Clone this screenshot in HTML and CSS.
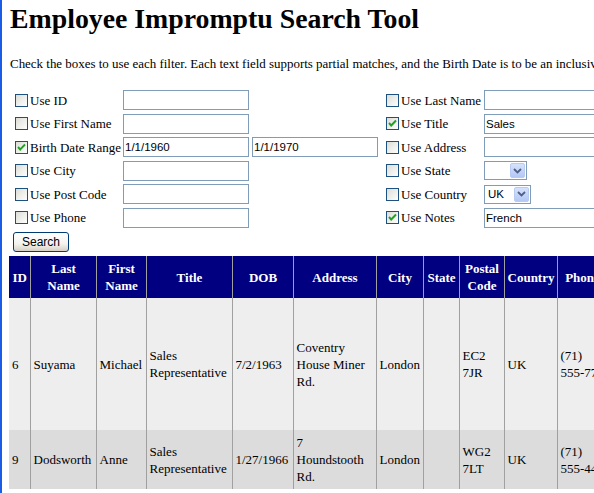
FILE: index.html
```html
<!DOCTYPE html>
<html>
<head>
<meta charset="utf-8">
<title>Employee Impromptu Search Tool</title>
<link rel="stylesheet" href="styles.css">
</head>
<body>
<h1 class="title">Employee Impromptu Search Tool</h1>
<p class="intro">Check the boxes to use each filter. Each text field supports partial matches, and the Birth Date is to be an inclusive range.</p>

<div class="filters">
  <label class="lbl"><span class="cb"><svg width="13" height="13" viewBox="0 0 13 13"><defs><linearGradient id="g" x1="0" y1="0" x2="1" y2="1"><stop offset="0" stop-color="#dcdcd5"/><stop offset="1" stop-color="#ffffff"/></linearGradient></defs><rect x="0.5" y="0.5" width="12" height="12" fill="url(#g)" stroke="#1c5180"/></svg></span>Use ID</label>
  <input class="txt" type="text" value="">
  <span></span>
  <label class="lbl"><span class="cb"><svg width="13" height="13" viewBox="0 0 13 13"><rect x="0.5" y="0.5" width="12" height="12" fill="url(#g)" stroke="#1c5180"/></svg></span>Use Last Name</label>
  <input class="txt" type="text" value="">

  <label class="lbl"><span class="cb"><svg width="13" height="13" viewBox="0 0 13 13"><rect x="0.5" y="0.5" width="12" height="12" fill="url(#g)" stroke="#1c5180"/></svg></span>Use First Name</label>
  <input class="txt" type="text" value="">
  <span></span>
  <label class="lbl"><span class="cb"><svg width="13" height="13" viewBox="0 0 13 13"><rect x="0.5" y="0.5" width="12" height="12" fill="url(#g)" stroke="#1c5180"/><polyline points="3,6 5.2,8.5 10,3.5" fill="none" stroke="#21a121" stroke-width="1.9"/></svg></span>Use Title</label>
  <input class="txt" type="text" value="Sales">

  <label class="lbl"><span class="cb"><svg width="13" height="13" viewBox="0 0 13 13"><rect x="0.5" y="0.5" width="12" height="12" fill="url(#g)" stroke="#1c5180"/><polyline points="3,6 5.2,8.5 10,3.5" fill="none" stroke="#21a121" stroke-width="1.9"/></svg></span>Birth Date Range</label>
  <input class="txt" type="text" value="1/1/1960">
  <input class="txt" type="text" value="1/1/1970">
  <label class="lbl"><span class="cb"><svg width="13" height="13" viewBox="0 0 13 13"><rect x="0.5" y="0.5" width="12" height="12" fill="url(#g)" stroke="#1c5180"/></svg></span>Use Address</label>
  <input class="txt" type="text" value="">

  <label class="lbl"><span class="cb"><svg width="13" height="13" viewBox="0 0 13 13"><rect x="0.5" y="0.5" width="12" height="12" fill="url(#g)" stroke="#1c5180"/></svg></span>Use City</label>
  <input class="txt" type="text" value="">
  <span></span>
  <label class="lbl"><span class="cb"><svg width="13" height="13" viewBox="0 0 13 13"><rect x="0.5" y="0.5" width="12" height="12" fill="url(#g)" stroke="#1c5180"/></svg></span>Use State</label>
  <div class="sel sel-state"><span class="sel-val"></span><span class="sel-btn"><svg width="9" height="6" viewBox="0 0 9 6"><polyline points="1,1 4.5,4.5 8,1" fill="none" stroke="#4d6185" stroke-width="1.8"/></svg></span></div>

  <label class="lbl"><span class="cb"><svg width="13" height="13" viewBox="0 0 13 13"><rect x="0.5" y="0.5" width="12" height="12" fill="url(#g)" stroke="#1c5180"/></svg></span>Use Post Code</label>
  <input class="txt" type="text" value="">
  <span></span>
  <label class="lbl"><span class="cb"><svg width="13" height="13" viewBox="0 0 13 13"><rect x="0.5" y="0.5" width="12" height="12" fill="url(#g)" stroke="#1c5180"/></svg></span>Use Country</label>
  <div class="sel sel-country"><span class="sel-val">UK</span><span class="sel-btn"><svg width="9" height="6" viewBox="0 0 9 6"><polyline points="1,1 4.5,4.5 8,1" fill="none" stroke="#4d6185" stroke-width="1.8"/></svg></span></div>

  <label class="lbl"><span class="cb"><svg width="13" height="13" viewBox="0 0 13 13"><rect x="0.5" y="0.5" width="12" height="12" fill="url(#g)" stroke="#1c5180"/></svg></span>Use Phone</label>
  <input class="txt" type="text" value="">
  <span></span>
  <label class="lbl"><span class="cb"><svg width="13" height="13" viewBox="0 0 13 13"><rect x="0.5" y="0.5" width="12" height="12" fill="url(#g)" stroke="#1c5180"/><polyline points="3,6 5.2,8.5 10,3.5" fill="none" stroke="#21a121" stroke-width="1.9"/></svg></span>Use Notes</label>
  <input class="txt" type="text" value="French">
</div>

<button class="btn" type="button">Search</button>

<table class="results">
  <colgroup>
    <col class="c-id"><col class="c-last"><col class="c-first"><col class="c-title"><col class="c-dob"><col class="c-addr"><col class="c-city"><col class="c-state"><col class="c-post"><col class="c-country"><col class="c-phone"><col class="c-ext"><col class="c-notes">
  </colgroup>
  <thead>
    <tr class="hrow">
      <th>ID</th><th>Last<br>Name</th><th>First<br>Name</th><th>Title</th><th>DOB</th><th>Address</th><th>City</th><th>State</th><th>Postal<br>Code</th><th>Country</th><th>Phone</th><th>Extension</th><th>Notes</th>
    </tr>
  </thead>
  <tbody>
    <tr class="row-a">
      <td>6</td><td>Suyama</td><td>Michael</td><td>Sales Representative</td><td>7/2/1963</td><td>Coventry House Miner Rd.</td><td>London</td><td></td><td>EC2 7JR</td><td>UK</td><td>(71) <span class="nw">555-7773</span></td><td>428</td><td>Michael is a graduate of Sussex University (MA, economics, 1983) and the University of California at Los Angeles (MBA, marketing, 1986). He has also taken the courses "Multi-Cultural Selling" and "Time Management for the Sales Professional." He is fluent in Japanese and can read and write French, Portuguese, and Spanish.</td>
    </tr>
    <tr class="row-b">
      <td>9</td><td>Dodsworth</td><td>Anne</td><td>Sales Representative</td><td>1/27/1966</td><td>7<br>Houndstooth Rd.</td><td>London</td><td></td><td>WG2 7LT</td><td>UK</td><td>(71) <span class="nw">555-4444</span></td><td>452</td><td>Anne has a BA degree in English from St. Lawrence College. She is fluent in French and German.</td>
    </tr>
  </tbody>
</table>
</body>
</html>
```
FILE: styles.css
```css
html {
  overflow: hidden;
  background: #ffffff;
}

body {
  margin: 0;
  padding: 3px 0 0 8px;
  min-height: 100vh;
  box-sizing: border-box;
  border-left: 2px solid #1a5ce6;
  font-family: "Liberation Serif", "Times New Roman", serif;
  font-size: 13px;
  line-height: 15px;
  color: #000000;
}

.title {
  margin: 0;
  font-size: 27.8px;
  line-height: 32px;
  font-weight: bold;
  white-space: nowrap;
}

.intro {
  margin: 21px 0 0;
  white-space: nowrap;
  font-size: 12.95px;
}

.filters {
  display: grid;
  grid-template-columns: 109px 129px 133px 99px 126px;
  grid-auto-rows: 20px;
  row-gap: 3.6px;
  align-items: center;
  margin: 19px 0 0 4px;
  width: 596px;
}

.lbl {
  display: flex;
  align-items: center;
  gap: 2px;
  padding-left: 1px;
  white-space: nowrap;
}

.cb {
  display: flex;
  width: 13px;
  height: 13px;
}

.txt {
  width: 126px;
  height: 20px;
  box-sizing: border-box;
  margin: 0;
  border: 1px solid #7f9db9;
  padding: 1px 1px;
  font-family: "Liberation Sans", Arial, sans-serif;
  font-size: 11.5px;
  color: #000000;
  background: #ffffff;
  outline: none;
}

.sel {
  display: flex;
  align-items: center;
  height: 19px;
  box-sizing: border-box;
  border: 1px solid #7f9db9;
  background: #ffffff;
  padding: 1px;
  font-family: "Liberation Sans", Arial, sans-serif;
  font-size: 11.5px;
}

.sel-state {
  width: 43px;
}

.sel-country {
  width: 47px;
}

.sel-val {
  flex: 1;
  padding-left: 2px;
}

.sel-btn {
  width: 15px;
  height: 15px;
  box-sizing: border-box;
  border: 1px solid #b9cbf3;
  border-radius: 2px;
  background: linear-gradient(#d6e2fd, #b4c8f6);
  display: flex;
  align-items: center;
  justify-content: center;
}

.btn {
  display: block;
  margin: 4.4px 0 0 3px;
  width: 56px;
  height: 20px;
  box-sizing: border-box;
  border: 1px solid #003c74;
  border-radius: 3px;
  background: linear-gradient(#ffffff 0%, #f4f3ee 60%, #d6d0c5 100%);
  font-family: "Liberation Sans", Arial, sans-serif;
  font-size: 12px;
  color: #000000;
  padding: 0;
}

.results {
  margin: 4px 0 0 -1px;
  border-collapse: collapse;
  table-layout: fixed;
  width: 1014px;
  line-height: 17px;
}

.results th,
.results td {
  padding: 2px 2px 2px 3px;
  border-left: 1px solid #a0a0a0;
  border-right: 1px solid #a0a0a0;
  vertical-align: middle;
  overflow: hidden;
}

.results tr > :first-child {
  border-left: none;
}

.results th {
  background: #000080;
  color: #ffffff;
  font-weight: bold;
  text-align: center;
}

.results td {
  text-align: left;
}

.nw {
  white-space: nowrap;
}

.hrow {
  height: 42px;
}

.row-a {
  height: 132px;
  background: #eeeeee;
}

.row-b {
  height: 59px;
  background: #dcdcdc;
}

.c-id { width: 21px; }
.c-last { width: 66px; }
.c-first { width: 50px; }
.c-title { width: 86px; }
.c-dob { width: 61px; }
.c-addr { width: 83px; }
.c-city { width: 47px; }
.c-state { width: 36px; }
.c-post { width: 45px; }
.c-country { width: 53px; }
.c-phone { width: 50px; }
.c-ext { width: 66px; }
.c-notes { width: 350px; }
```
